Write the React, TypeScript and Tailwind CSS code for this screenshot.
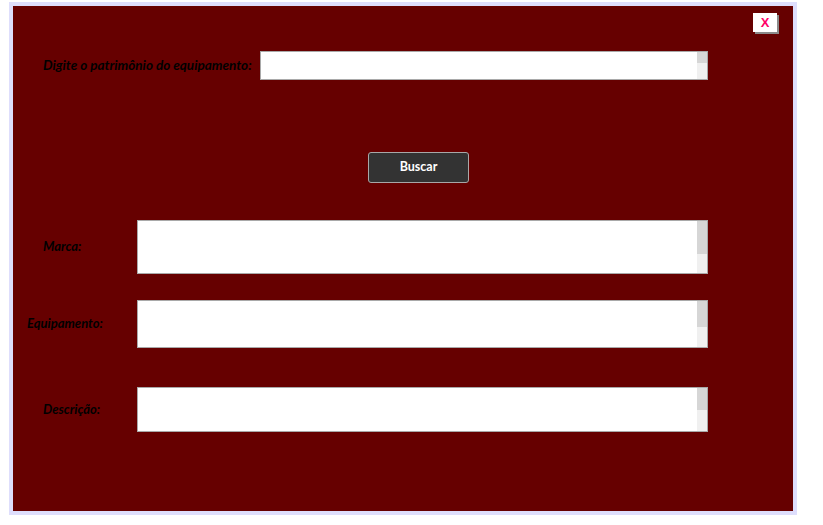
import React from 'react';

const font = { fontFamily: 'Lato, "Open Sans", sans-serif' };

const Field = ({ h, thumb }: { h: string; thumb: string }) => (
  <div className={`flex w-[571px] ${h} border border-[#a9a9a9] bg-white`}>
    <div className="flex-1" />
    <div className="flex w-[10px] flex-col bg-[#f0f0f0]">
      <div className={`${thumb} bg-[#d6d6d6]`} />
    </div>
  </div>
);

const App: React.FC = () => {
  return (
    <div className="h-[525px] w-[823px] bg-white pl-[9px] pt-[2px]" style={font}>
      <div className="h-[513px] w-[788px] border-4 border-[#dedefc] bg-[#660000]">
        <div className="flex justify-end pr-[16px] pt-[7px]">
          <button className="flex h-[19px] w-[24px] items-center justify-center bg-white font-['Liberation_Sans',sans-serif] text-[13px] font-bold text-[#ff0066] shadow-[2px_2px_0_#8a8a8a]">
            X
          </button>
        </div>

        <div className="mt-[19px] flex h-[29px] items-center">
          <div className="w-[247px] whitespace-nowrap pl-[30px] text-[13.5px] font-bold italic text-black">
            Digite o patrimônio do equipamento:
          </div>
          <div className="flex h-[29px] w-[448px] border border-[#a9a9a9] bg-white">
            <div className="flex-1" />
            <div className="flex w-[10px] flex-col bg-[#f0f0f0]">
              <div className="h-[11px] bg-[#d6d6d6]" />
            </div>
          </div>
        </div>

        <div className="mt-[72px] flex pl-[355px]">
          <button className="flex h-[31px] w-[101px] items-center justify-center rounded-[3px] border border-[#a8a8a8] bg-[#333333] text-[12.5px] font-bold text-white">
            Buscar
          </button>
        </div>

        <div className="mt-[37px] flex items-center">
          <div className="w-[124px] pl-[30px] text-[13px] font-bold italic text-black">Marca:</div>
          <Field h="h-[54px]" thumb="h-[33px]" />
        </div>

        <div className="mt-[26px] flex items-center">
          <div className="w-[124px] pl-[14px] text-[13px] font-bold italic text-black">Equipamento:</div>
          <Field h="h-[48px]" thumb="h-[26px]" />
        </div>

        <div className="mt-[39px] flex items-center">
          <div className="w-[124px] pl-[30px] text-[13px] font-bold italic text-black">Descrição:</div>
          <Field h="h-[45px]" thumb="h-[22px]" />
        </div>
      </div>
    </div>
  );
};

export default App;
